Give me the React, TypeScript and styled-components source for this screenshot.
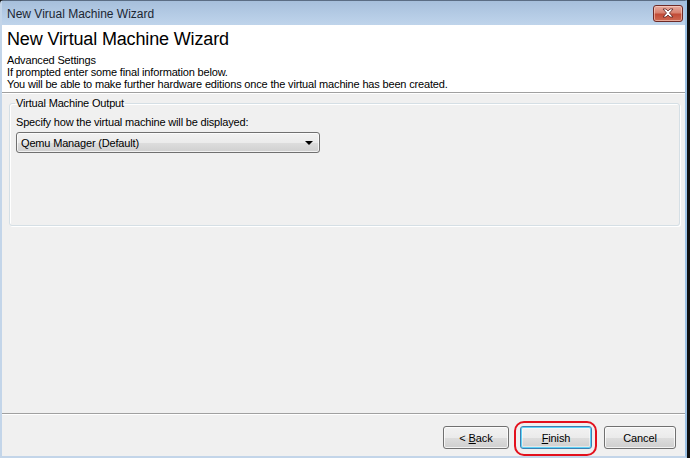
import React from "react";
import styled, { createGlobalStyle } from "styled-components";

const GlobalStyle = createGlobalStyle`
  html, body {
    margin: 0;
    padding: 0;
    background: #111;
  }
  body {
    font-family: "Liberation Sans", Arial, sans-serif;
    font-size: 11px;
    letter-spacing: -0.17px;
    color: #000;
  }
`;

const Screen = styled.div`
  width: 690px;
  height: 458px;
  overflow: hidden;
  display: flex;
`;

const Window = styled.div`
  width: 687px;
  height: 458px;
  box-sizing: border-box;
  display: flex;
  flex-direction: column;
  border-top: 1px solid #5b6d84;
  border-left: 2px solid #c3d5e9;
  border-right: 2px solid #9cc2e6;
  border-bottom: 2px solid #c3d5e9;
  border-top-left-radius: 4px;
  background: #f0f0f0;
`;

const TitleBar = styled.div`
  height: 24px;
  flex: none;
  display: flex;
  align-items: center;
  justify-content: space-between;
  padding: 0 2px 0 5px;
  background: linear-gradient(to bottom, #a6bfdb 0%, #b3cae4 50%, #bfd4eb 100%);
`;

const TitleText = styled.span`
  font-size: 12px;
  letter-spacing: 0;
  color: #1b2633;
  padding-top: 1px;
`;

const CloseButton = styled.div`
  width: 30px;
  height: 17px;
  box-sizing: border-box;
  border: 1px solid #6d2a27;
  border-radius: 3px;
  display: flex;
  align-items: center;
  justify-content: center;
  background: linear-gradient(to bottom, #e7ab9f 0%, #d88270 45%, #c24b37 55%, #cf6a52 100%);
  box-shadow: inset 0 0 0 1px rgba(255, 220, 210, 0.55);
`;

const Header = styled.div`
  height: 67px;
  flex: none;
  background: #fff;
  padding: 3px 5px 0;
  box-sizing: border-box;
`;

const HeaderTitle = styled.div`
  font-size: 18px;
  letter-spacing: -0.15px;
  line-height: 22px;
  height: 26px;
`;

const HeaderLine = styled.div`
  line-height: 12px;
`;

const Separator = styled.div`
  flex: none;
  height: 1px;
  background: #a0a0a0;
  border-bottom: 1px solid #fff;
`;

const Body = styled.div`
  flex: 1;
  padding: 3px 5px 0 7px;
`;

const GroupBox = styled.fieldset`
  margin: 0;
  height: 129px;
  box-sizing: border-box;
  border: 1px solid #d5dfe5;
  border-radius: 3px;
  box-shadow: inset 1px 1px 0 #fff, 1px 1px 0 #fff;
  padding: 0 6px;
`;

const Legend = styled.legend`
  padding: 0 1px;
  margin-left: -1px;
  line-height: 12px;
  font-size: 11px;
`;

const FieldLabel = styled.div`
  line-height: 12px;
  margin-top: 7px;
`;

const Select = styled.div`
  margin-top: 4px;
  width: 304px;
  height: 21px;
  box-sizing: border-box;
  border: 1px solid #707070;
  border-radius: 3px;
  display: flex;
  align-items: center;
  justify-content: space-between;
  padding: 0 6px 0 4px;
  background: linear-gradient(to bottom, #f2f2f2 0%, #ebebeb 50%, #dddddd 51%, #cfcfcf 100%);
  box-shadow: inset 0 0 0 1px rgba(255, 255, 255, 0.7);
`;

const Arrow = styled.span`
  width: 0;
  height: 0;
  border-left: 4px solid transparent;
  border-right: 4px solid transparent;
  border-top: 4px solid #000;
  margin-top: 1px;
`;

const Footer = styled.div`
  height: 41px;
  flex: none;
  display: flex;
  justify-content: flex-end;
  align-items: flex-start;
  padding: 11px 9px 0 0;
  box-sizing: border-box;
`;

const Button = styled.button<{ $default?: boolean; $w: number; $gap?: number }>`
  position: relative;
  width: ${(p) => p.$w}px;
  height: 23px;
  box-sizing: border-box;
  margin: 0 0 0 ${(p) => p.$gap ?? 0}px;
  padding: 0;
  font-family: "Liberation Sans", Arial, sans-serif;
  font-size: 11px;
  letter-spacing: -0.1px;
  color: #000;
  border: 1px solid ${(p) => (p.$default ? "#3c7fb1" : "#707070")};
  border-radius: 3px;
  background: linear-gradient(to bottom, #f2f2f2 0%, #ebebeb 50%, #dddddd 51%, #cfcfcf 100%);
  box-shadow: ${(p) =>
    p.$default
      ? "inset 0 0 0 1px #5fd2f7, inset 0 0 0 2px rgba(255,255,255,0.45)"
      : "inset 0 0 0 1px rgba(255,255,255,0.75)"};
`;

const Highlight = styled.span`
  position: absolute;
  left: -7px;
  top: -6px;
  right: -6px;
  bottom: -8px;
  border: 2.5px solid #e3111d;
  border-radius: 10px;
  pointer-events: none;
`;

const Key = styled.span`
  text-decoration: underline;
`;

export default function App() {
  return (
    <>
      <GlobalStyle />
      <Screen>
        <Window>
          <TitleBar>
            <TitleText>New Virual Machine Wizard</TitleText>
            <CloseButton>
              <svg width="14" height="10" viewBox="0 0 14 10">
                <path
                  d="M2 1 L5 1 L7 3 L9 1 L12 1 L8.5 5 L12 9 L9 9 L7 7 L5 9 L2 9 L5.5 5 Z"
                  fill="#fff"
                  stroke="#5a2220"
                  strokeWidth="0.8"
                  strokeLinejoin="round"
                />
              </svg>
            </CloseButton>
          </TitleBar>
          <Header>
            <HeaderTitle>New Virtual Machine Wizard</HeaderTitle>
            <HeaderLine>Advanced Settings</HeaderLine>
            <HeaderLine>If prompted enter some final information below.</HeaderLine>
            <HeaderLine>
              You will be able to make further hardware editions once the virtual machine has been created.
            </HeaderLine>
          </Header>
          <Separator />
          <Body>
            <GroupBox>
              <Legend>Virtual Machine Output</Legend>
              <FieldLabel>Specify how the virtual machine will be displayed:</FieldLabel>
              <Select>
                <span>Qemu Manager (Default)</span>
                <Arrow />
              </Select>
            </GroupBox>
          </Body>
          <Separator />
          <Footer>
            <Button $w={66}>
              &lt; <Key>B</Key>ack
            </Button>
            <Button $w={72} $gap={11} $default>
              <Key>F</Key>inish
              <Highlight />
            </Button>
            <Button $w={72} $gap={12}>Cancel</Button>
          </Footer>
        </Window>
      </Screen>
    </>
  );
}
